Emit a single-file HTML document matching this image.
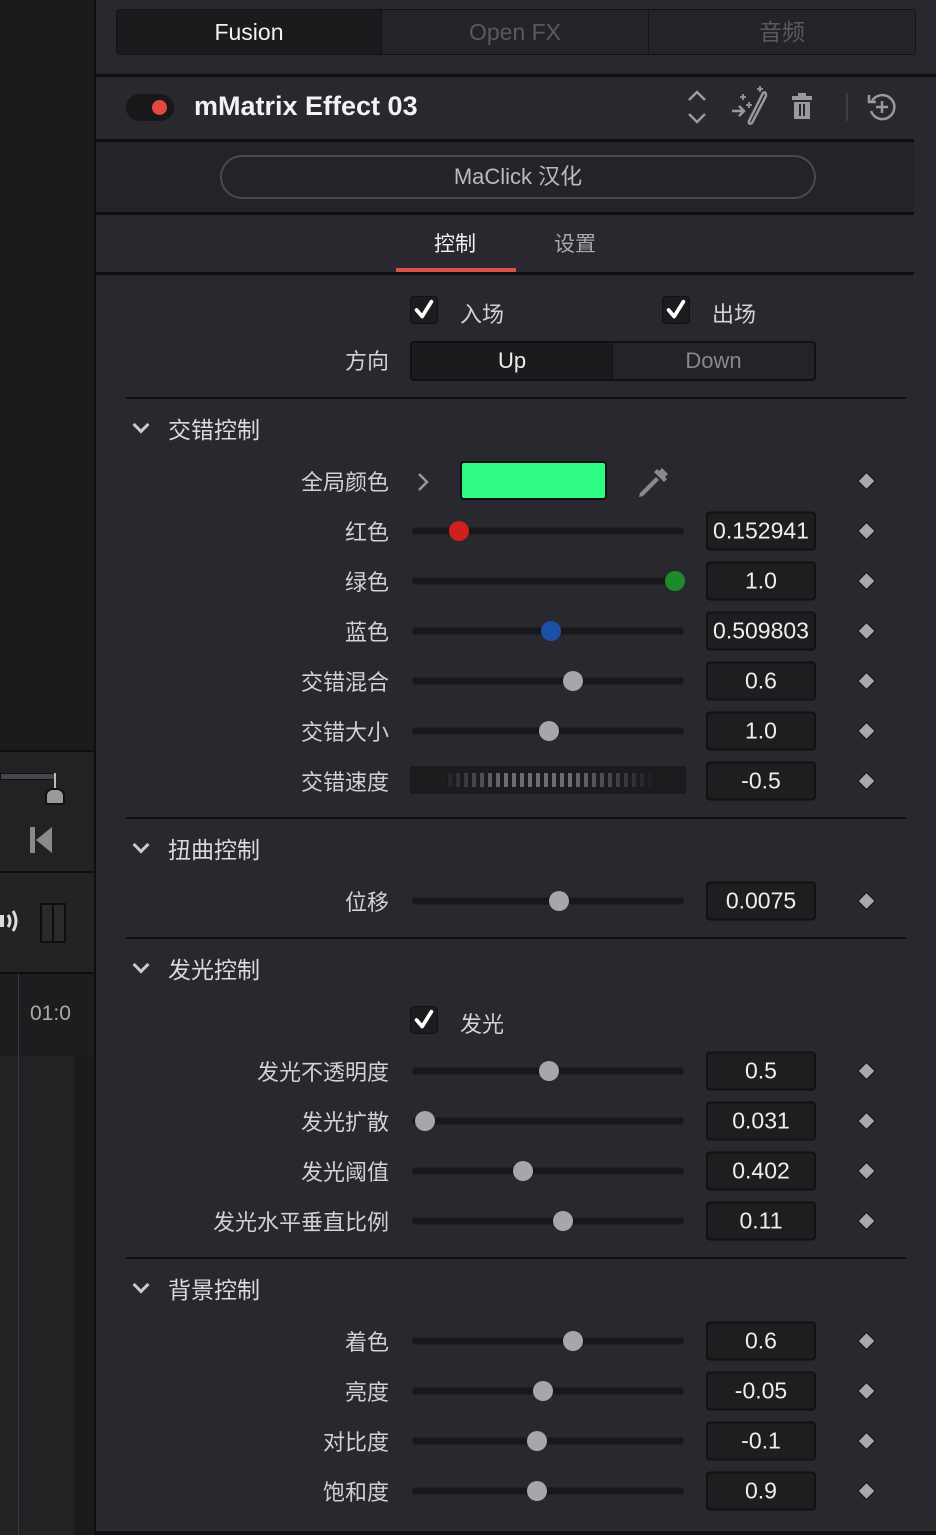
<!DOCTYPE html>
<html><head><meta charset="utf-8">
<style>
*{margin:0;padding:0;box-sizing:border-box}
body{width:936px;height:1535px;background:#28282e;position:relative;overflow:hidden;font-family:"Liberation Sans","Noto Sans CJK SC",sans-serif;color:#d0d0d0}
.a{position:absolute}
.lbl{position:absolute;right:547px;font-size:22px;color:#d2d2d2;white-space:nowrap;transform:translateY(-50%)}
.trk{position:absolute;left:412px;width:272px;height:7px;border-radius:4px;background:#18181b;transform:translateY(-50%)}
.th{position:absolute;width:20px;height:20px;border-radius:50%;background:#a7a7a9;transform:translate(-50%,-50%)}
.val{position:absolute;left:706px;width:110px;height:39px;border:2px solid #111;border-radius:4px;background:#1e1e21;color:#eee;font-size:23px;text-align:center;line-height:35px;transform:translateY(-50%)}
.dia{position:absolute;left:859px;width:15px;height:15px;background:#a8a8aa;border:2px solid #1a1a1a;transform:translateY(-50%) rotate(45deg)}
.sec{position:absolute;left:168px;font-size:23px;color:#dadada;transform:translateY(-50%)}
.chev{position:absolute;left:135px;width:12px;height:12px;border-right:3px solid #ccc;border-bottom:3px solid #ccc;transform:translateY(-75%) rotate(45deg)}
.div{position:absolute;left:126px;width:780px;height:2px;background:#111}
.cb{position:absolute;width:28px;height:28px;background:#1c1c1f;border:1px solid #111;border-radius:4px;transform:translateY(-50%)}
</style></head><body>
<svg width="0" height="0" style="position:absolute"><defs><symbol id="ck" viewBox="0 0 28 28"><path d="M6 14 L12 21 L22 5" fill="none" stroke="#fff" stroke-width="4" stroke-linecap="round" stroke-linejoin="round"/></symbol></defs></svg>
<!-- left column -->
<div class="a" style="left:0;top:0;width:94px;height:752px;background:#1a1a1b"></div>
<div class="a" style="left:0;top:750px;width:94px;height:2px;background:#0e0e0e"></div>
<div class="a" style="left:0;top:752px;width:94px;height:120px;background:#222225"></div>
<div class="a" style="left:0;top:773px;width:56px;height:7px;background:#45454a;border:1px solid #111"></div>
<div class="a" style="left:54px;top:773px;width:2px;height:20px;background:#bbb"></div>
<div class="a" style="left:45px;top:788px;width:20px;height:17px;background:#9a9a9a;border:2px solid #111;border-radius:8px 8px 3px 3px"></div>
<svg class="a" style="left:29px;top:826px" width="24" height="28"><rect x="1" y="1" width="5" height="26" fill="#8a8a8a"/><path d="M23 1 L7 14 L23 27Z" fill="#8a8a8a"/></svg>
<div class="a" style="left:0;top:871px;width:94px;height:2px;background:#0e0e0e"></div>
<div class="a" style="left:0;top:873px;width:94px;height:100px;background:#232326"></div>
<svg class="a" style="left:0;top:906px" width="22" height="30" fill="none" stroke="#ddd" stroke-width="3"><rect x="-2" y="9" width="6" height="12" fill="#ddd" stroke="none"/><path d="M8 9 Q12 15 8 21 M13 5 Q19 15 13 25"/></svg>
<div class="a" style="left:40px;top:903px;width:26px;height:40px;border:2px solid #0e0e0e;background:#2a2a2d"></div>
<div class="a" style="left:52px;top:903px;width:2px;height:40px;background:#0e0e0e"></div>
<div class="a" style="left:0;top:972px;width:94px;height:2px;background:#0e0e0e"></div>
<div class="a" style="left:0;top:974px;width:94px;height:82px;background:#1d1d1f"></div>
<div class="a" style="left:18px;top:974px;width:1px;height:561px;background:#3a3a3e"></div>
<div class="a" style="left:30px;top:1002px;font-size:21px;color:#aaa">01:0</div>
<div class="a" style="left:0;top:1056px;width:94px;height:479px;background:#222224"></div>
<div class="a" style="left:18px;top:1056px;width:1px;height:479px;background:#3a3a3e"></div>
<div class="a" style="left:74px;top:1056px;width:20px;height:479px;background:#1a1a1b"></div>
<div class="a" style="left:94px;top:0;width:2px;height:1535px;background:#0e0e0e"></div>

<!-- top tabs -->
<div class="a" style="left:116px;top:9px;width:800px;height:46px;background:#242428;border:1px solid #111;border-radius:3px"></div>
<div class="a" style="left:117px;top:10px;width:264px;height:44px;background:#1b1b1d;color:#f2f2f2;font-size:23px;text-align:center;line-height:44px">Fusion</div>
<div class="a" style="left:381px;top:10px;width:1px;height:44px;background:#151517"></div>
<div class="a" style="left:648px;top:10px;width:1px;height:44px;background:#151517"></div>
<div class="a" style="left:382px;top:10px;width:266px;height:44px;color:#5a5a5e;font-size:23px;text-align:center;line-height:44px">Open FX</div>
<div class="a" style="left:649px;top:10px;width:266px;height:44px;color:#5a5a5e;font-size:23px;text-align:center;line-height:44px">音频</div>
<div class="a" style="left:96px;top:74px;width:840px;height:3px;background:#0f0f10"></div>

<!-- header -->
<div class="a" style="left:126px;top:94px;width:48px;height:27px;border-radius:14px;background:#18181a"></div>
<div class="a" style="left:152px;top:100px;width:15px;height:15px;border-radius:50%;background:#e5483d"></div>
<div class="a" style="left:194px;top:91px;font-size:27px;color:#f2f2f2;font-weight:bold">mMatrix Effect 03</div>
<svg class="a" style="left:684px;top:88px" width="26" height="38" fill="none" stroke="#9a9a9a" stroke-width="2.5"><path d="M5 12 L13 4 L21 12 M5 26 L13 34 L21 26"/></svg>
<svg class="a" style="left:730px;top:85px" width="42" height="42" fill="none" stroke="#9a9a9a" stroke-width="2.5"><path d="M2 26 H14 M9 21 L14 26 L9 31"/><path d="M33 8 L19 36 Q18 40 22 38 L36 11 Q36 6 33 8Z"/><path d="M10 12 h6 M13 9 v6 M16 20 h6 M19 17 v6 M27 4 h6 M30 1 v6" stroke-width="1.8"/></svg>
<svg class="a" style="left:790px;top:92px" width="24" height="28"><rect x="2" y="4" width="20" height="4" fill="#9a9a9a"/><rect x="8" y="1" width="8" height="4" fill="#9a9a9a"/><rect x="4" y="10" width="16" height="17" fill="#9a9a9a"/><rect x="9" y="12" width="2" height="12" fill="#28282e"/><rect x="13" y="12" width="2" height="12" fill="#28282e"/></svg>
<div class="a" style="left:846px;top:93px;width:2px;height:28px;background:#3e3e42"></div>
<svg class="a" style="left:866px;top:91px" width="32" height="32" fill="none" stroke="#9a9a9a" stroke-width="2.5"><path d="M6 10 A12 12 0 1 1 5 20"/><path d="M3 4 V11 H10"/><path d="M16 10 V22 M10 16 H22"/></svg>
<div class="a" style="left:96px;top:139px;width:818px;height:3px;background:#0f0f10"></div>
<div class="a" style="left:96px;top:142px;width:818px;height:71px;background:#242428"></div>
<div class="a" style="left:220px;top:155px;width:596px;height:44px;border:2px solid #4a4a4f;border-radius:22px;color:#bbb;font-size:22px;text-align:center;line-height:40px">MaClick 汉化</div>
<div class="a" style="left:96px;top:212px;width:818px;height:3px;background:#0f0f10"></div>
<div class="a" style="left:434px;top:228px;font-size:21px;color:#f0f0f0">控制</div>
<div class="a" style="left:554px;top:228px;font-size:21px;color:#aaa">设置</div>
<div class="a" style="left:396px;top:268px;width:120px;height:4px;background:#d9534a"></div>
<div class="a" style="left:96px;top:272px;width:818px;height:3px;background:#0f0f10"></div>

<!-- checkboxes -->
<div class="cb" style="left:410px;top:310px"><svg width="26" height="26"><use href="#ck"/></svg></div><div class="a" style="left:460px;top:297px;font-size:22px;color:#d2d2d2">入场</div>
<div class="cb" style="left:662px;top:310px"><svg width="26" height="26"><use href="#ck"/></svg></div><div class="a" style="left:712px;top:297px;font-size:22px;color:#d2d2d2">出场</div>
<div class="lbl" style="top:360px">方向</div>
<div class="a" style="left:410px;top:341px;width:406px;height:40px;border:2px solid #111;border-radius:4px;background:#242428"></div>
<div class="a" style="left:412px;top:343px;width:200px;height:36px;background:#1b1b1d;color:#eee;font-size:22px;text-align:center;line-height:36px">Up</div>
<div class="a" style="left:612px;top:343px;width:1px;height:36px;background:#111"></div>
<div class="a" style="left:613px;top:343px;width:201px;height:36px;color:#888;font-size:22px;text-align:center;line-height:36px">Down</div>
<div class="div" style="top:397px"></div>

<div class="chev" style="top:428px"></div><div class="sec" style="top:428px">交错控制</div>
<div class="lbl" style="top:481px">全局颜色</div>
<svg class="a" style="left:416px;top:472px" width="14" height="20" fill="none" stroke="#999" stroke-width="2.5"><path d="M3 2 L11 10 L3 18"/></svg>
<div class="a" style="left:460px;top:461px;width:147px;height:39px;background:#2efb84;border:2px solid #111;border-radius:4px"></div>
<svg class="a" style="left:636px;top:466px" width="34" height="34" fill="#8a8a8a"><path d="M26 2 L32 8 L29 11 L31 13 L28 16 L18 6 L21 3 L23 5Z"/><path d="M20 11 L23 14 L7 30 L3 31 L4 27Z"/></svg>
<div class="dia" style="top:481px"></div>

<div class="lbl" style="top:531px">红色</div><div class="trk" style="top:531px"></div><div class="th" style="left:459px;top:531px;background:#cf1f1f"></div><div class="val" style="top:531px">0.152941</div><div class="dia" style="top:531px"></div>
<div class="lbl" style="top:581px">绿色</div><div class="trk" style="top:581px"></div><div class="th" style="left:675px;top:581px;background:#1f8a2a"></div><div class="val" style="top:581px">1.0</div><div class="dia" style="top:581px"></div>
<div class="lbl" style="top:631px">蓝色</div><div class="trk" style="top:631px"></div><div class="th" style="left:551px;top:631px;background:#1e4fa6"></div><div class="val" style="top:631px">0.509803</div><div class="dia" style="top:631px"></div>
<div class="lbl" style="top:681px">交错混合</div><div class="trk" style="top:681px"></div><div class="th" style="left:573px;top:681px"></div><div class="val" style="top:681px">0.6</div><div class="dia" style="top:681px"></div>
<div class="lbl" style="top:731px">交错大小</div><div class="trk" style="top:731px"></div><div class="th" style="left:549px;top:731px"></div><div class="val" style="top:731px">1.0</div><div class="dia" style="top:731px"></div>
<div class="lbl" style="top:781px">交错速度</div>
<div class="a" style="left:410px;top:766px;width:276px;height:28px;background:#1c1c1f"></div>
<div class="a" style="left:440px;top:773px;width:216px;height:14px;background-image:repeating-linear-gradient(90deg,#6e6e72 0 4px,transparent 4px 8px);-webkit-mask-image:linear-gradient(90deg,transparent,#000 30%,#000 60%,transparent);mask-image:linear-gradient(90deg,transparent,#000 30%,#000 60%,transparent)"></div>
<div class="val" style="top:781px">-0.5</div><div class="dia" style="top:781px"></div>
<div class="div" style="top:817px"></div>

<div class="chev" style="top:848px"></div><div class="sec" style="top:848px">扭曲控制</div>
<div class="lbl" style="top:901px">位移</div><div class="trk" style="top:901px"></div><div class="th" style="left:559px;top:901px"></div><div class="val" style="top:901px">0.0075</div><div class="dia" style="top:901px"></div>
<div class="div" style="top:937px"></div>

<div class="chev" style="top:968px"></div><div class="sec" style="top:968px">发光控制</div>
<div class="cb" style="left:410px;top:1020px"><svg width="26" height="26"><use href="#ck"/></svg></div><div class="a" style="left:460px;top:1007px;font-size:22px;color:#d2d2d2">发光</div>
<div class="lbl" style="top:1071px">发光不透明度</div><div class="trk" style="top:1071px"></div><div class="th" style="left:549px;top:1071px"></div><div class="val" style="top:1071px">0.5</div><div class="dia" style="top:1071px"></div>
<div class="lbl" style="top:1121px">发光扩散</div><div class="trk" style="top:1121px"></div><div class="th" style="left:425px;top:1121px"></div><div class="val" style="top:1121px">0.031</div><div class="dia" style="top:1121px"></div>
<div class="lbl" style="top:1171px">发光阈值</div><div class="trk" style="top:1171px"></div><div class="th" style="left:523px;top:1171px"></div><div class="val" style="top:1171px">0.402</div><div class="dia" style="top:1171px"></div>
<div class="lbl" style="top:1221px">发光水平垂直比例</div><div class="trk" style="top:1221px"></div><div class="th" style="left:563px;top:1221px"></div><div class="val" style="top:1221px">0.11</div><div class="dia" style="top:1221px"></div>
<div class="div" style="top:1257px"></div>

<div class="chev" style="top:1288px"></div><div class="sec" style="top:1288px">背景控制</div>
<div class="lbl" style="top:1341px">着色</div><div class="trk" style="top:1341px"></div><div class="th" style="left:573px;top:1341px"></div><div class="val" style="top:1341px">0.6</div><div class="dia" style="top:1341px"></div>
<div class="lbl" style="top:1391px">亮度</div><div class="trk" style="top:1391px"></div><div class="th" style="left:543px;top:1391px"></div><div class="val" style="top:1391px">-0.05</div><div class="dia" style="top:1391px"></div>
<div class="lbl" style="top:1441px">对比度</div><div class="trk" style="top:1441px"></div><div class="th" style="left:537px;top:1441px"></div><div class="val" style="top:1441px">-0.1</div><div class="dia" style="top:1441px"></div>
<div class="lbl" style="top:1491px">饱和度</div><div class="trk" style="top:1491px"></div><div class="th" style="left:537px;top:1491px"></div><div class="val" style="top:1491px">0.9</div><div class="dia" style="top:1491px"></div>
<div class="a" style="left:96px;top:1531px;width:840px;height:4px;background:#0f0f10"></div>
</body></html>
